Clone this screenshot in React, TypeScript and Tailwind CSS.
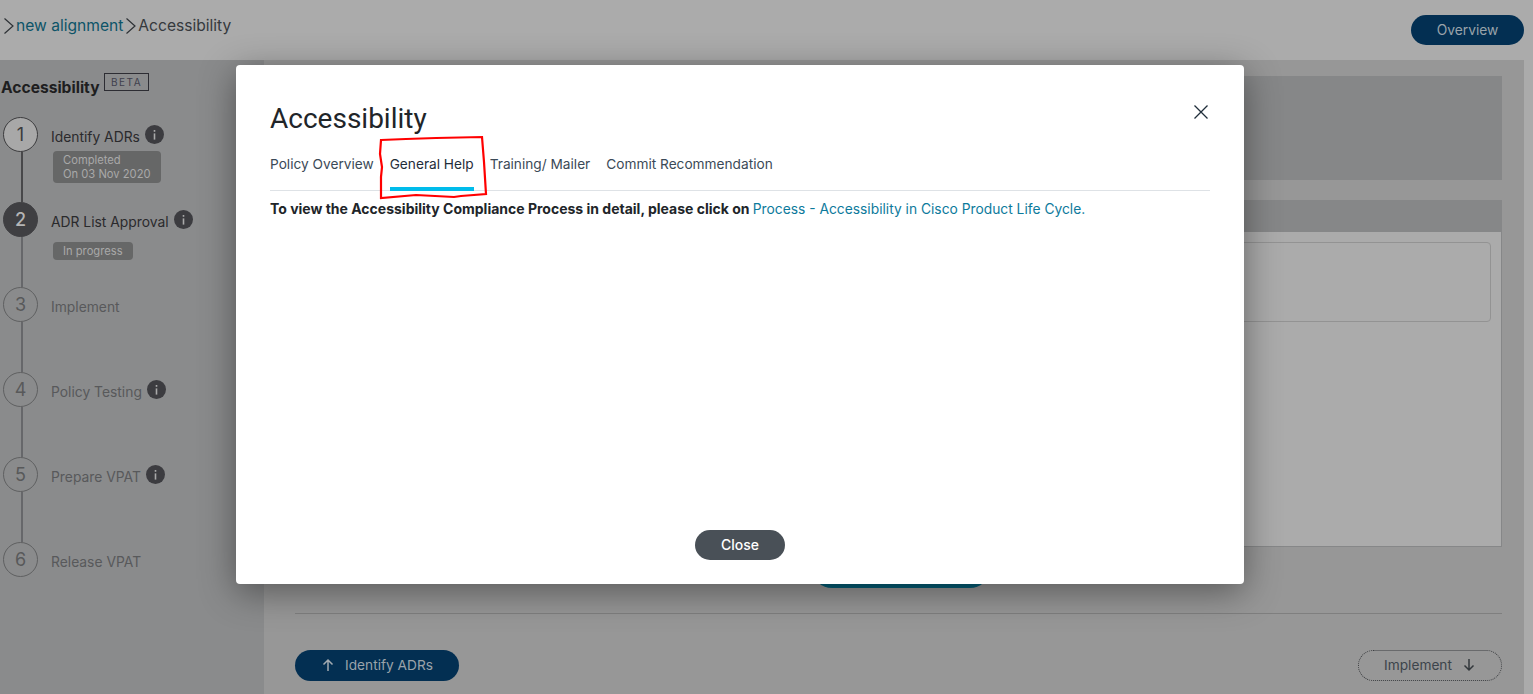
import React from "react";

const font = { fontFamily: "Inter, 'Liberation Sans', sans-serif" };

function Info() {
  return (
    <span className="inline-flex h-[19px] w-[19px] items-center justify-center rounded-full bg-[#3c3c40]">
      <svg width="9" height="12" viewBox="0 0 9 12" fill="none">
        <rect x="3.7" y="1" width="1.6" height="1.8" fill="#a9a9a9" />
        <rect x="3.7" y="4.4" width="1.6" height="6.2" fill="#a9a9a9" />
      </svg>
    </span>
  );
}

type Step = { n: number; label: string; info?: boolean; badge?: string[]; active?: boolean; done?: boolean };
const steps: Step[] = [
  { n: 1, label: "Identify ADRs", info: true, badge: ["Completed", "On 03 Nov 2020"], done: true },
  { n: 2, label: "ADR List Approval", info: true, badge: ["In progress"], active: true },
  { n: 3, label: "Implement" },
  { n: 4, label: "Policy Testing", info: true },
  { n: 5, label: "Prepare VPAT", info: true },
  { n: 6, label: "Release VPAT" },
];

function StepRow({ s, last }: { s: Step; last: boolean }) {
  const circle = s.active
    ? "bg-[#3f3f42] border-[#3f3f42] text-[#b5b5b5] font-medium"
    : s.done
      ? "bg-[#a8a8a8] border-[#3c3c3e] text-[#3c3c3e]"
      : "bg-[#8a8b8c] border-[#5f6061] text-[#58595a]";
  return (
    <div className={`flex ${last ? "h-[35px]" : "h-[85px]"}`}>
      <div className="flex w-[51px] shrink-0 flex-col pl-[3px]">
        <div className={`z-10 flex h-[35px] w-[35px] shrink-0 items-center justify-center rounded-full border text-[18px] ${circle}`}>
          {s.n}
        </div>
        {!last && <div className={`ml-[17.5px] w-[2px] flex-1 ${s.done ? "bg-[#48484a]" : "bg-[#66676a]"}`} />}
      </div>
      <div>
        <div className={`mt-[9px] flex h-[22px] items-center gap-[5px] text-[13.85px] ${s.done || s.active ? "text-[#2a2a2c]" : "text-[#58595b]"}`}>
          <span>{s.label}</span>
          {s.info && <span className="-mt-[5px] flex"><Info /></span>}
        </div>
        {s.badge && (
          <div className={`ml-[2px] inline-block rounded-[4px] bg-[#666767] px-[10px] text-[11.2px] leading-[14px] text-[#a9a9a9] ${s.active ? "mt-[9px] py-[2px]" : "mt-[3px] py-[2px]"}`}>
            {s.badge.map((b) => (
              <div key={b}>{b}</div>
            ))}
          </div>
        )}
      </div>
    </div>
  );
}

function Chevron() {
  return (
    <svg width="12" height="18" viewBox="0 0 12 18" fill="none" className="shrink-0">
      <path d="M1.5 1.5 L10 9 L1.5 16.5" stroke="#2d3135" strokeWidth="1.2" />
    </svg>
  );
}

export default function App() {
  return (
    <div style={font} className="relative h-[694px] w-[1533px] overflow-hidden bg-[#ababab]">
      <header className="flex h-[60px] items-start justify-between pr-[9px]">
        <div className="mt-[16px] flex items-center gap-[1px] pl-[3px] text-[15.6px] leading-[19px]">
          <Chevron />
          <span className="text-[#0d5468]">new alignment</span>
          <span className="ml-[1px] flex"><Chevron /></span>
          <span className="text-[#35393d]">Accessibility</span>
        </div>
        <button className="mt-[15px] h-[30px] w-[113px] rounded-full bg-[#032f52] text-[13.8px] text-[#9aa3aa]">Overview</button>
      </header>

      <div className="flex h-[634px] pr-[9px]">
        <aside className="w-[264px] shrink-0 bg-[#8a8b8c]">
          <div className="relative h-[57px] pl-[1px]">
            <span className="absolute left-[1px] top-[18px] text-[15.6px] font-bold leading-[19px] text-[#1e1e20]">Accessibility</span>
            <span className="absolute left-[104px] top-[13px] flex h-[18px] w-[45px] items-center justify-center border border-[#2d2d33] text-[10px] tracking-[1.5px] text-[#3f3f4d]">BETA</span>
          </div>
          {steps.map((s, i) => (
            <StepRow key={s.n} s={s} last={i === steps.length - 1} />
          ))}
        </aside>

        <main className="flex-1 bg-[#979797] pl-[31px] pr-[22px] pt-[16px]">
          <div className="h-[104px] bg-[#868788]" />
          <div className="mt-[20px] h-[347px] border-r border-b border-[#868788] bg-[#ababab]">
            <div className="h-[32px] bg-[#868788]" />
            <div className="flex justify-end pl-[10px] pr-[10px] pt-[10px]">
              <div className="h-[80px] w-full rounded-[4px] border border-[#939393]" />
            </div>
          </div>
          <div className="flex h-[41px] items-end justify-center">
            <div className="ml-[4px] h-[40px] w-[178px] rounded-full bg-[#045f78]" />
          </div>
          <div className="mt-[25px] border-t border-[#7f7f7f]" />
          <div className="mt-[36px] flex items-center justify-between">
            <button className="flex h-[31px] w-[164px] items-center justify-center gap-[10px] rounded-full bg-[#032f52] pb-[1px] text-[13.7px] text-[#9aa3aa]">
              <svg width="14" height="14" viewBox="0 0 14 14" fill="none"><path d="M7 13V2M2.5 6.5 7 2l4.5 4.5" stroke="#a3abb1" strokeWidth="1.5" /></svg>
              Identify ADRs
            </button>
            <button className="flex h-[31px] w-[144px] items-center justify-center gap-[10px] rounded-full border border-dotted border-[#3d3f42] pb-[1px] text-[13.7px] text-[#3c444b]">
              Implement
              <svg width="14" height="14" viewBox="0 0 14 14" fill="none"><path d="M7 1v11M2.5 7.5 7 12l4.5-4.5" stroke="#33383c" strokeWidth="1.5" /></svg>
            </button>
          </div>
        </main>
      </div>

      {/* Modal */}
      <div className="absolute left-[236px] top-[65px] flex h-[519px] w-[1008px] flex-col rounded-[4px] bg-white px-[34px] shadow-[0_8px_36px_rgba(0,0,0,0.42)]">
        <div className="flex h-[71px] items-end justify-between">
          <h1 className="font-[Roboto] text-[28px] leading-[34px] text-[#212529]">Accessibility</h1>
          <svg width="16" height="16" viewBox="0 0 16 16" fill="none" className="mb-[16px] mr-[1px]">
            <path d="M1.5 1.5l13 13M14.5 1.5l-13 13" stroke="#1f2d3a" strokeWidth="1.3" />
          </svg>
        </div>
        <nav className="mt-[8px] flex h-[47px] gap-[16px] border-b border-[#dee2e6] text-[13.68px] text-[#3b4a57]">
          {["Policy Overview", "General Help", "Training/ Mailer", "Commit Recommendation"].map((t) => (
            <span
              key={t}
              className={`h-[47px] pt-[12px] leading-[17px] ${t === "General Help" ? "border-b-[4px] border-[#00bceb] text-[#1f2d3a]" : ""}`}
            >
              {t}
            </span>
          ))}
        </nav>
        <p className="mt-[9px] text-[14px] leading-[18px] text-[#212529]">
          <b className="font-bold">To view the Accessibility Compliance Process in detail, please click on </b>
          <span className="text-[13.8px] text-[#0d7a9c]">Process - Accessibility in Cisco Product Life Cycle.</span>
        </p>
        <div className="flex flex-1 items-end justify-center pb-[24px]">
          <button className="h-[30px] w-[90px] rounded-full bg-[#495057] pb-[2px] text-[14px] font-medium text-white">Close</button>
        </div>
      </div>

      {/* Red hand-drawn annotation */}
      <svg className="absolute left-[376px] top-[132px]" width="116" height="72" viewBox="0 0 116 72" fill="none">
        <path d="M5 8 L30 7 L60 6 L106 5 L108 30 L110 62 L85 64 L78 65 L40 63 L5 66 L5 45 L6 35 L4 22 Z" stroke="#ff0000" strokeWidth="2.2" />
      </svg>
    </div>
  );
}
